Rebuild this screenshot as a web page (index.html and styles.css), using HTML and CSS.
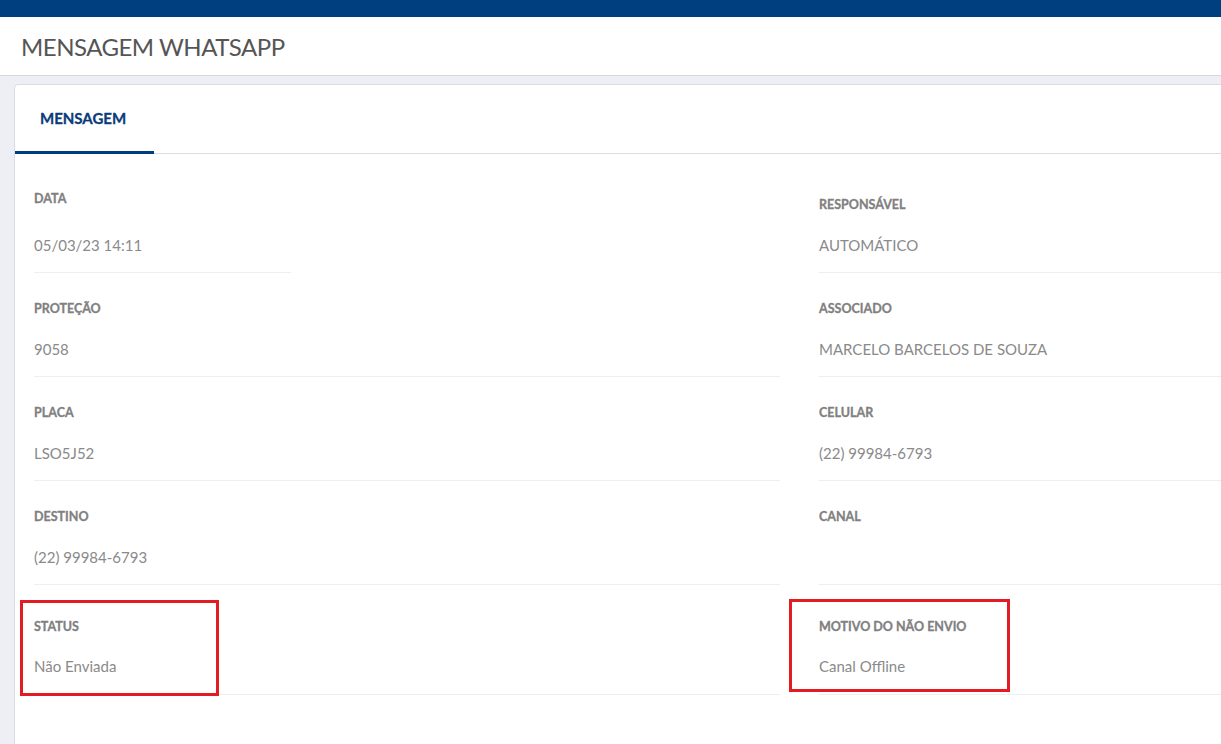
FILE: index.html
```html
<!DOCTYPE html>
<html lang="pt-BR">
  <head>
    <meta charset="UTF-8" />
    <meta name="viewport" content="width=device-width, initial-scale=1.0" />
    <title>Mensagem WhatsApp</title>
    <link rel="stylesheet" href="styles.css">
  </head>
  <body>
    <div class="top-bar"></div>
    <header class="page-header">
      <h1>MENSAGEM WHATSAPP</h1>
    </header>

    <main class="page-body">
      <section class="card">
        <nav class="tabs">
          <a class="tab tab-active">MENSAGEM</a>
        </nav>

        <div class="fields">
          <div class="field field-short field-raised">
            <div class="field-label">DATA</div>
            <div class="field-value">05/03/23 14:11</div>
          </div>
          <div class="field">
            <div class="field-label">RESPONSÁVEL</div>
            <div class="field-value">AUTOMÁTICO</div>
          </div>

          <div class="field">
            <div class="field-label">PROTEÇÃO</div>
            <div class="field-value">9058</div>
          </div>
          <div class="field">
            <div class="field-label">ASSOCIADO</div>
            <div class="field-value">MARCELO BARCELOS DE SOUZA</div>
          </div>

          <div class="field">
            <div class="field-label">PLACA</div>
            <div class="field-value">LSO5J52</div>
          </div>
          <div class="field">
            <div class="field-label">CELULAR</div>
            <div class="field-value">(22) 99984-6793</div>
          </div>

          <div class="field">
            <div class="field-label">DESTINO</div>
            <div class="field-value">(22) 99984-6793</div>
          </div>
          <div class="field">
            <div class="field-label">CANAL</div>
            <div class="field-value"></div>
          </div>

          <div class="field field-last">
            <span class="highlight highlight-status"></span>
            <div class="field-label">STATUS</div>
            <div class="field-value">Não Enviada</div>
          </div>
          <div class="field field-last">
            <span class="highlight highlight-motivo"></span>
            <div class="field-label">MOTIVO DO NÃO ENVIO</div>
            <div class="field-value">Canal Offline</div>
          </div>
        </div>
      </section>
    </main>
  </body>
</html>
```

FILE: styles.css
```css
* {
  box-sizing: border-box;
}
html, body {
  margin: 0;
  height: 100%;
  overflow: hidden;
}
body {
  font-family: Lato, "Liberation Sans", sans-serif;
  background: #eeeef5;
}
.top-bar {
  height: 17px;
  background: #003f7f;
}
.page-header {
  height: 59px;
  background: #fff;
  border-bottom: 1px solid #d6d6de;
  padding: 0 21px;
}
.page-header h1 {
  margin: 0;
  font-size: 24px;
  line-height: 59px;
  font-weight: 400;
  letter-spacing: -0.5px;
  color: #555;
}
.page-body {
  padding: 8px 0 0 14px;
  height: calc(100% - 76px);
}
.card {
  height: calc(100% + 20px);
  margin-right: -20px;
  background: #fff;
  border: 1px solid #dcdce4;
  border-radius: 4px 0 0 0;
}
.tabs {
  display: flex;
  height: 69px;
  border-bottom: 1px solid #dcdce4;
}
.tab {
  display: block;
  width: 139px;
  padding-left: 25px;
  font-size: 15px;
  font-weight: 700;
  -webkit-text-stroke: 0.3px #0b3b7a;
  line-height: 66px;
  color: #0b3b7a;
  border-bottom: 3px solid transparent;
  margin-bottom: -1px;
}
.tab-active {
  border-bottom-color: #003f7f;
}
.fields {
  display: grid;
  grid-template-columns: 746px 1fr;
  column-gap: 39px;
  padding: 15px 0 0 19px;
}
.field {
  position: relative;
  padding: 28px 0 15px;
  border-bottom: 1px solid #eeeeee;
}
.field-label {
  font-size: 12.5px;
  font-weight: 700;
  -webkit-text-stroke: 0.3px #808080;
  line-height: 16px;
  color: #808080;
}
.field-value {
  margin-top: 22px;
  height: 22px;
  font-size: 15px;
  line-height: 21px;
  color: #8a8a8a;
}
.field-short {
  width: 257px;
}
.field-raised .field-label {
  margin-top: -6px;
}
.field-raised .field-value {
  margin-top: 28px;
}
.field-last {
  padding-top: 34px;
  padding-bottom: 16px;
}
.field-last .field-value {
  margin-top: 21px;
}
.highlight {
  position: absolute;
  border: 3px solid #e31b23;
}
.highlight-status {
  left: -14px;
  top: 15px;
  width: 199px;
  height: 96px;
}
.highlight-motivo {
  left: -30px;
  top: 14px;
  width: 221px;
  height: 93px;
}
```
